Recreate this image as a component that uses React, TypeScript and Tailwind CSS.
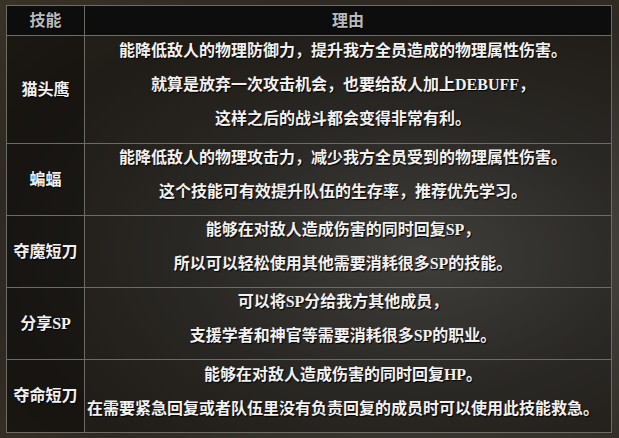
import React from "react";

const rows = [
	{
		name: "猫头鹰",
		h: "h-[108px]",
		lines: ["能降低敌人的物理防御力，提升我方全员造成的物理属性伤害。", "就算是放弃一次攻击机会，也要给敌人加上DEBUFF，", "这样之后的战斗都会变得非常有利。"],
	},
	{
		name: "蝙蝠",
		h: "h-[72px]",
		lines: ["能降低敌人的物理攻击力，减少我方全员受到的物理属性伤害。", "这个技能可有效提升队伍的生存率，推荐优先学习。"],
	},
	{
		name: "夺魔短刀",
		h: "h-[72px]",
		lines: ["能够在对敌人造成伤害的同时回复SP，", "所以可以轻松使用其他需要消耗很多SP的技能。"],
	},
	{
		name: "分享SP",
		h: "h-[72px]",
		lines: ["可以将SP分给我方其他成员，", "支援学者和神官等需要消耗很多SP的职业。"],
	},
	{
		name: "夺命短刀",
		h: "h-[73px]",
		lines: ["能够在对敌人造成伤害的同时回复HP。", "在需要紧急回复或者队伍里没有负责回复的成员时可以使用此技能救急。"],
	},
];

export default function App() {
	return (
		<div
			className="w-[619px] h-[438px] pt-[5px] pl-[6px] bg-[radial-gradient(ellipse_at_68%_58%,#5c5a55_0%,#3d3a35_38%,#2e2922_72%,#3b3226_100%)]"
			style={{ fontFamily: '"Liberation Serif", "Noto Sans CJK SC", serif' }}
		>
			<div className="w-[606px] border border-[#6d6b66] font-bold text-[16px] text-[#f1f1f1] [text-shadow:1px_1px_1px_#000]">
				<div className="flex h-[29px] bg-[#0d0d0d] text-[#b9b9b9]">
					<div className="w-[78px] flex items-center justify-center border-r border-[#6d6b66]">技能</div>
					<div className="flex-1 flex items-center justify-center">理由</div>
				</div>
				{rows.map((r) => (
					<div key={r.name} className={`flex border-t border-[#6d6b66] ${r.h}`}>
						<div className="w-[78px] flex items-center justify-center border-r border-[#6d6b66] bg-black/50">
							{r.name}
						</div>
						<div className="flex-1 flex flex-col items-center justify-center pr-[10px] pb-[9px] bg-black/30">
							{r.lines.map((l) => (
								<p key={l} className="leading-[34px] whitespace-nowrap">
									{l}
								</p>
							))}
						</div>
					</div>
				))}
			</div>
		</div>
	);
}
